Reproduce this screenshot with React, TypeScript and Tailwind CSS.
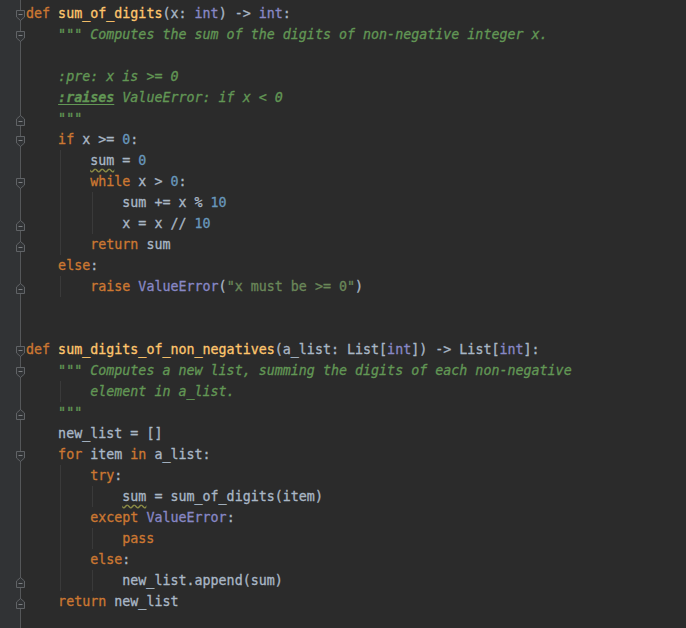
type Kind = 'k' | 'f' | 't' | 'n' | 'b' | 'd' | 'r' | 's' | 'w';
type Token = [Kind, string];
type Fold = 'open' | 'close' | null;

interface Line {
  indent: number;
  tokens: Token[];
  fold?: Fold;
  guides?: number[];
}

const kindClass: Record<Kind, string> = {
  k: 'text-[#cc7832]',
  f: 'text-[#ffc66d]',
  t: 'text-[#a9b7c6]',
  n: 'text-[#6897bb]',
  b: 'text-[#8888c6]',
  d: 'text-[#629755] italic',
  r: 'text-[#629755] italic font-bold underline underline-offset-2',
  s: 'text-[#6a8759]',
  w: 'text-[#a9b7c6] underline decoration-wavy decoration-[#8c8c45] underline-offset-[3px]',
};

const lines: Line[] = [
  { indent: 0, fold: 'open', tokens: [['k', 'def '], ['f', 'sum_of_digits'], ['t', '(x: '], ['b', 'int'], ['t', ') -> '], ['b', 'int'], ['t', ':']] },
  { indent: 4, fold: 'open', tokens: [['d', '""" Computes the sum of the digits of non-negative integer x.']] },
  { indent: 0, tokens: [] },
  { indent: 4, tokens: [['d', ':pre: x is >= 0']] },
  { indent: 4, tokens: [['r', ':raises'], ['d', ' ValueError: if x < 0']] },
  { indent: 4, fold: 'close', tokens: [['d', '"""']] },
  { indent: 4, fold: 'open', tokens: [['k', 'if '], ['t', 'x >= '], ['n', '0'], ['t', ':']] },
  { indent: 8, guides: [4], tokens: [['w', 'sum'], ['t', ' = '], ['n', '0']] },
  { indent: 8, fold: 'open', guides: [4], tokens: [['k', 'while '], ['t', 'x > '], ['n', '0'], ['t', ':']] },
  { indent: 12, guides: [4, 8], tokens: [['t', 'sum += x % '], ['n', '10']] },
  { indent: 12, fold: 'close', guides: [4, 8], tokens: [['t', 'x = x // '], ['n', '10']] },
  { indent: 8, fold: 'close', guides: [4], tokens: [['k', 'return '], ['t', 'sum']] },
  { indent: 4, tokens: [['k', 'else'], ['t', ':']] },
  { indent: 8, fold: 'close', guides: [4], tokens: [['k', 'raise '], ['b', 'ValueError'], ['t', '('], ['s', '"x must be >= 0"'], ['t', ')']] },
  { indent: 0, tokens: [] },
  { indent: 0, tokens: [] },
  { indent: 0, fold: 'open', tokens: [['k', 'def '], ['f', 'sum_digits_of_non_negatives'], ['t', '(a_list: List['], ['b', 'int'], ['t', ']) -> List['], ['b', 'int'], ['t', ']:']] },
  { indent: 4, fold: 'open', tokens: [['d', '""" Computes a new list, summing the digits of each non-negative']] },
  { indent: 8, guides: [4], tokens: [['d', 'element in a_list.']] },
  { indent: 4, fold: 'close', tokens: [['d', '"""']] },
  { indent: 4, tokens: [['t', 'new_list = []']] },
  { indent: 4, fold: 'open', tokens: [['k', 'for '], ['t', 'item '], ['k', 'in '], ['t', 'a_list:']] },
  { indent: 8, guides: [4], tokens: [['k', 'try'], ['t', ':']] },
  { indent: 12, guides: [4, 8], tokens: [['w', 'sum'], ['t', ' = sum_of_digits(item)']] },
  { indent: 8, guides: [4], tokens: [['k', 'except '], ['b', 'ValueError'], ['t', ':']] },
  { indent: 12, guides: [4, 8], tokens: [['k', 'pass']] },
  { indent: 8, guides: [4], tokens: [['k', 'else'], ['t', ':']] },
  { indent: 12, fold: 'close', guides: [4, 8], tokens: [['t', 'new_list.append(sum)']] },
  { indent: 4, fold: 'close', tokens: [['k', 'return '], ['t', 'new_list']] },
];

const guideLeft: Record<number, string> = {
  4: 'left-[34px]',
  8: 'left-[66px]',
};

function FoldMarker({ kind }: { kind: 'open' | 'close' }) {
  const path =
    kind === 'open'
      ? 'M0.5 0.5 H8.5 V7 L4.5 10.5 L0.5 7 Z'
      : 'M0.5 10.5 H8.5 V4 L4.5 0.5 L0.5 4 Z';
  const minusY = kind === 'open' ? 4.5 : 6.5;
  return (
    <svg
      width="9"
      height="11"
      viewBox="0 0 9 11"
      className="absolute left-[-4px] top-[7px]"
    >
      <path d={path} fill="#313335" stroke="#606366" strokeWidth="1" />
      <line x1="2.5" y1={minusY} x2="6.5" y2={minusY} stroke="#7a7d80" strokeWidth="1" />
    </svg>
  );
}

function CodeRow({ line }: { line: Line }) {
  return (
    <div className="flex h-[21px]">
      <div className="w-[20px] bg-[#313335]" />
      <div className="relative w-px bg-[#555759]">
        {line.fold && <FoldMarker kind={line.fold} />}
      </div>
      <div className="relative ml-[5px] flex-1 whitespace-pre leading-[21px]">
        {line.guides?.map((g) => (
          <div key={g} className={`absolute top-0 h-[21px] w-px bg-[#3a3a3a] ${guideLeft[g]}`} />
        ))}
        <span className="relative [-webkit-text-stroke:0.3px_currentColor]">
          {' '.repeat(line.indent)}
          {line.tokens.map(([kind, text], i) => (
            <span key={i} className={kindClass[kind]}>
              {text}
            </span>
          ))}
        </span>
      </div>
    </div>
  );
}

export default function App() {
  return (
    <div className="flex h-[628px] w-[686px] flex-col overflow-hidden bg-[#2b2b2b] font-['DejaVu_Sans_Mono',monospace] text-[13.33px] text-[#a9b7c6]">
      <div className="flex h-[3px] shrink-0">
        <div className="w-[20px] bg-[#313335]" />
        <div className="w-px bg-[#555759]" />
      </div>
      {lines.map((line, i) => (
        <CodeRow key={i} line={line} />
      ))}
      <div className="flex flex-1">
        <div className="w-[20px] bg-[#313335]" />
        <div className="w-px bg-[#555759]" />
      </div>
    </div>
  );
}
